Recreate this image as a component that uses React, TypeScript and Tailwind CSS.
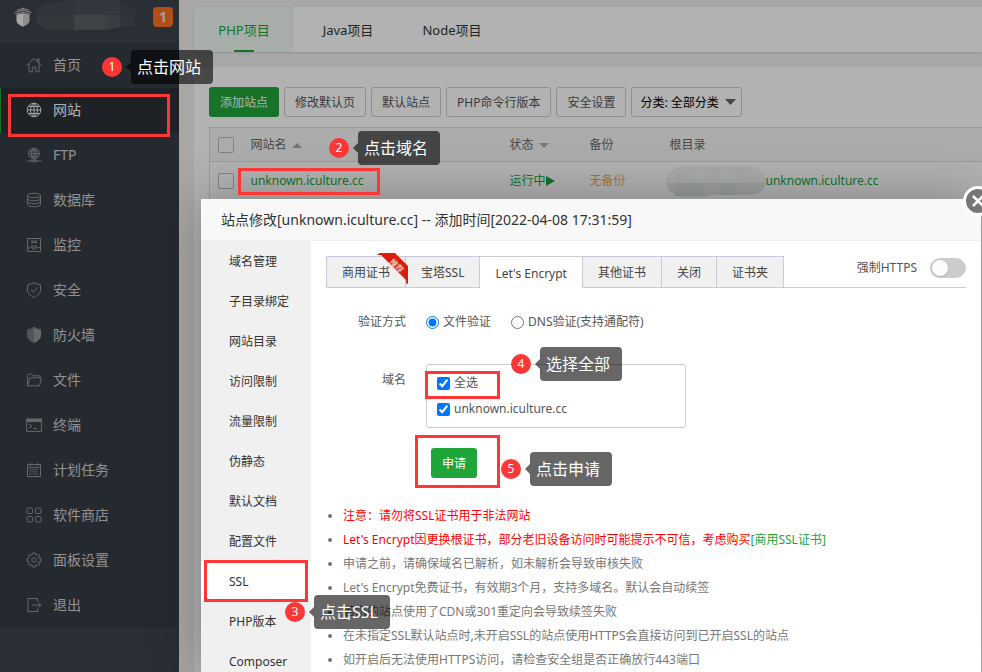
import React, { useState } from 'react';
import clsx from 'clsx';

type IconProps = { children: React.ReactNode };

const Icon = ({ children }: IconProps) => (
  <svg className="h-4 w-4 shrink-0" viewBox="0 0 16 16" fill="none" stroke="currentColor" strokeWidth={1} aria-hidden="true">
    {children}
  </svg>
);

const menu = [
  {
    label: '首页',
    icon: <path d="M.8 8.4 8 1.5l7.2 6.9M3 6.8v8h3.3v-4.6h3.4v4.6H13v-8M11.3 4.3V2h1.6v4" />,
  },
  {
    label: '网站',
    icon: <path d="M8 1.2a6.8 6.8 0 1 0 0 13.6A6.8 6.8 0 0 0 8 1.2zm0 0c-4.6 3-4.6 10.6 0 13.6M8 1.2c4.6 3 4.6 10.6 0 13.6M8 1.2v13.6M1.2 8h13.6M2.3 4.5h11.4M2.3 11.5h11.4" />,
  },
  {
    label: 'FTP',
    icon: <path d="M8 1.2a5.4 5.4 0 1 0 0 10.8A5.4 5.4 0 0 0 8 1.2zm0 0c-3.5 2.5-3.5 8.3 0 10.8M8 1.2c3.5 2.5 3.5 8.3 0 10.8M8 1.2V12M2.6 6.6h10.8M3.5 3.9h9M3.5 9.3h9M.5 14h5.2M10.3 14h5.2M5.7 13.2h4.6v1.6H5.7z" />,
  },
  {
    label: '数据库',
    icon: <path d="M1.5 3.5c0-3 13-3 13 0s-13 3-13 0zv9c0 3 13 3 13 0v-9M1.5 6.5c0 3 13 3 13 0M1.5 9.5c0 3 13 3 13 0" />,
  },
  {
    label: '监控',
    icon: <path d="M1.5 1.5h13v13h-13zM5 4h6M5 5.5h6M2 11h2.5L6 8.5 7.5 13l2-5 1.3 3.5 1-1H14" />,
  },
  {
    label: '安全',
    icon: <path d="M8 .8 14.5 3v5c0 3.5-3 6-6.5 7.5C4.500 14 1.5 11.5 1.5 8V3zM4.800 7.500l2.500 2.700 4.200-4.700" />,
  },
  {
    label: '防火墙',
    icon: (
      <>
        <path fill="currentColor" stroke="none" opacity=".7" d="M8 0v16C3.5 14 1 11.5 1 8V2.5l1.2-.8v1l1.5-.5V1.2L5 .9v1l1.5-.7V.2z" />
        <path fill="currentColor" stroke="none" d="M8 0v16c4.5-2 7-4.5 7-8V2.5l-1.2-.8v1l-1.5-.5V1.2L11 .9v1l-1.5-.7V.2z" />
      </>
    ),
  },
  {
    label: '文件',
    icon: <path d="M1.5 13.5v-10l1-1.5h3.3l1.5 1.8H14v2M1.5 13.8 4 5.8h11.4l-1.9 8z" />,
  },
  {
    label: '终端',
    icon: (
      <>
        <path d="M.6 2h14.8v12.4H.6zM3 7l3 2.2L3 11.4M7 11.5h4" />
        <path fill="currentColor" stroke="none" d="M1 2h14v3H1z" />
      </>
    ),
  },
  {
    label: '计划任务',
    icon: (
      <>
        <path d="M1.5 2.5h13v12h-13zM1.5 5.3h13M4.5.8v3M11.5.8v3" />
        <path strokeDasharray="2 1" d="M3.5 7.5h9M3.5 9.8h9M3.5 12h9" />
      </>
    ),
  },
  {
    label: '软件商店',
    icon: (
      <>
        <rect x="1" y="1" width="5.5" height="5.5" rx="1.3" />
        <rect x="9.5" y="1" width="5.5" height="5.5" rx="1.3" />
        <rect x="1" y="9.5" width="5.5" height="5.5" rx="1.3" />
        <rect x="9.5" y="9.5" width="5.5" height="5.5" rx="1.3" />
      </>
    ),
  },
  {
    label: '面板设置',
    icon: (
      <>
        <path d="m6.500 1-.5 1.900-1 .4L3.200 2.400 2.300 3.300l1 1.800-.4 1L1 6.600v2.700l1.900.5.400 1-1 1.800 1 1 1.700-1 1 .4.500 2h2.900l.5-2 1-.4 1.800 1 .9-1-1-1.800.4-1 2-.5V6.600l-2-.5-.4-1 1-1.800-.9-.9-1.800.9-1-.4L9.400 1z" />
        <circle cx="8" cy="8" r="2.2" />
      </>
    ),
  },
  {
    label: '退出',
    icon: <path d="M11.5 4.5v-3H2v13h9.5v-3M6 8h9M12.3 5.5 14.8 8l-2.5 2.5" />,
  },
];

const projectTabs = ['PHP项目', 'Java项目', 'Node项目'];
const toolbar = ['修改默认页', '默认站点', 'PHP命令行版本', '安全设置'];
const siteNav = [
  '域名管理', '子目录绑定', '网站目录', '访问限制', '流量限制', '伪静态',
  '默认文档', '配置文件', 'SSL', 'PHP版本', 'Composer',
];
const certTabs = ['商用证书', '宝塔SSL', "Let's Encrypt", '其他证书', '关闭', '证书夹'];
const tips = [
  '申请之前，请确保域名已解析，如未解析会导致审核失败',
  "Let's Encrypt免费证书，有效期3个月，支持多域名。默认会自动续签",
  '若您的站点使用了CDN或301重定向会导致续签失败',
  '在未指定SSL默认站点时,未开启SSL的站点使用HTTPS会直接访问到已开启SSL的站点',
  '如开启后无法使用HTTPS访问，请检查安全组是否正确放行443端口',
];

const frames = [
  'left-2 top-[94px] h-[43px] w-[162px]',
  'left-[238px] top-[168px] h-[27px] w-[142px]',
  'left-[204px] top-[560px] h-[42px] w-[104px]',
  'left-[425px] top-[371px] h-7 w-[75px]',
  'left-[415px] top-[435px] h-[53px] w-[85px]',
];

const steps = [
  { text: '点击网站', place: 'left-[102px] top-[50px]' },
  { text: '点击域名', place: 'left-[329px] top-[131px]' },
  { text: '点击SSL', place: 'left-[285px] top-[595px]' },
  { text: '选择全部', place: 'left-[511px] top-[347px]' },
  { text: '点击申请', place: 'left-[501px] top-[452px]' },
];

function Sidebar() {
  return (
    <aside className="flex w-[179px] shrink-0 flex-col bg-[#3c444d]">
      <div className="flex h-[43px] items-start pl-3.5 pr-1.5 pt-[7px]">
        <svg className="h-5 w-[18px]" viewBox="0 0 18 20" aria-hidden="true">
          <path d="M9 6.200 2.500 7.800v6c0 2.700 3.500 4.700 6.500 5.900z" fill="#eee" />
          <path d="M9 6.200l6.500 1.600v6c0 2.700-3.500 4.700-6.500 5.900z" fill="#ccc" />
          <path d="M9 .5v3M3 3.200 9 1.500l6 1.700M.5 5.600 9 3.300l8.500 2.300M1.500 7.400 9 5.300l7.500 2.100" fill="none" stroke="#c4c4c4" />
        </svg>
        <svg className="ml-1 -mt-[7px] h-[31px] w-[100px]" viewBox="0 0 100 31" aria-hidden="true">
          <path d="M4 8Q10 2 38 0v15H0Q0 11 4 8z" fill="#444c54" />
          <path d="M38 0h46v15H38z" fill="#4a5159" />
          <path d="M84 5l15 3v7H84z" fill="#424a53" />
          <path d="M0 15h38v15H11Q1 28 0 15z" fill="#4a5158" />
          <path d="M38 15h31v15H38z" fill="#5a6067" />
          <path d="M69 15h15v12l-15 3z" fill="#52595f" />
          <path d="M84 15h15v11H84z" fill="#444c54" />
        </svg>
        <span className="ml-auto flex h-5 w-5 items-center justify-center rounded bg-[#ff7125] text-sm font-bold text-gray-200">1</span>
      </div>
      <nav className="bg-[#363d45]">
        {menu.map((item, i) => (
          <a
            key={item.label}
            href="#"
            className={clsx(
              'flex h-[45px] items-center gap-[11px] border-l pb-0.5 pl-[25px] text-sm',
              i === 1 ? 'border-[#20a53a] bg-[#2c3138] text-white' : 'border-transparent text-[#d0d0d0]'
            )}
          >
            <span className={i === 1 ? 'opacity-90' : 'opacity-60'}>
              <Icon>{item.icon}</Icon>
            </span>
            {item.label}
          </a>
        ))}
      </nav>
    </aside>
  );
}

function SiteList() {
  return (
    <main className="min-w-0 flex-1 bg-[#f0f0f1] pl-[15px] pt-[7px]">
      <div className="flex h-[45px] gap-1 rounded-l bg-white shadow">
        {projectTabs.map((tab, i) => (
          <button
            key={tab}
            type="button"
            className={clsx(
              'relative w-[100px] pt-0.5 text-[13px]',
              i === 0 ? 'rounded-l bg-[#f0faf4] text-[#20a53a]' : 'text-[#333]'
            )}
          >
            {tab}
            {i === 0 && <span className="absolute bottom-0 left-10 h-0.5 w-5 bg-[#20a53a]" />}
          </button>
        ))}
      </div>

      <section className="mt-[15px] h-full bg-white pl-[15px] pt-5">
        <div className="flex gap-[5px] text-xs text-[#555]">
          <button type="button" className="h-[30px] rounded-[3px] bg-[#20a53a] px-[11px] pt-0.5 text-white">添加站点</button>
          {toolbar.map((label) => (
            <button key={label} type="button" className="h-[30px] whitespace-nowrap rounded-[3px] border border-[#ccc] px-2.5 pt-0.5">
              {label}
            </button>
          ))}
          <div className="relative">
            <select aria-label="分类" className="h-[30px] w-[111px] appearance-none rounded-[3px] border border-[#ccc] pl-2 pt-0.5 text-xs text-black">
              <option>分类: 全部分类</option>
            </select>
            <svg className="pointer-events-none absolute right-1.5 top-3 h-1.5 w-[11px]" viewBox="0 0 11 6" fill="#666" aria-hidden="true">
              <path d="M0 0h11L5.500 6z" />
            </svg>
          </div>
        </div>

        <table className="mt-2.5 w-full table-fixed border border-r-0 border-[#ddd] text-left text-xs text-[#666]">
          <colgroup>
            <col className="w-8" />
            <col className="w-[259px]" />
            <col className="w-20" />
            <col className="w-20" />
            <col />
          </colgroup>
          <thead>
            <tr className="h-[34px] border-b border-[#ddd] bg-[#f6f6f6]">
              <th className="pl-2"><CheckBox label="全选网站" /></th>
              <th className="pl-[9px] font-normal">网站名 <Caret up /></th>
              <th className="pl-[9px] font-normal">状态 <Caret /></th>
              <th className="pl-[9px] font-normal">备份</th>
              <th className="pl-[9px] font-normal">根目录</th>
            </tr>
          </thead>
          <tbody>
            <tr className="h-[38px] text-[#20a53a]">
              <td className="pl-2"><CheckBox label="选择 unknown.iculture.cc" /></td>
              <td className="pl-[9px]"><a href="#">unknown.iculture.cc</a></td>
              <td className="pl-[9px]">
                <a href="#" className="flex items-center">
                  运行中
                  <svg className="h-2.5 w-[9px]" viewBox="0 0 9 10" fill="currentColor" aria-hidden="true"><path d="M0 0l9 5-9 5z" /></svg>
                </a>
              </td>
              <td className="pl-[9px]"><a href="#" className="text-[#f0ad4e]">无备份</a></td>
              <td className="pl-1">
                <a href="#" className="flex items-center">
                  <svg className="h-8 w-[101px] shrink-0" viewBox="0 0 101 32" aria-hidden="true">
                    <path d="M16 1h70q14 2 15 17H1Q2 4 16 1z" fill="#f3f5f4" />
                    <path d="M10 4h14v14H10zM40 3h15v15H40zM70 3h15v15H70z" fill="#eff2f0" />
                    <path d="M1 18h100q-2 11-15 12H46l-6 2H16Q3 28 1 18z" fill="#e2e8e4" />
                    <path d="M10 18h30v13H10zM55 18h15v12H55z" fill="#dae1dc" />
                  </svg>
                  unknown.iculture.cc
                </a>
              </td>
            </tr>
          </tbody>
        </table>
      </section>
    </main>
  );
}

const CheckBox = ({ label }: { label: string }) => (
  <input type="checkbox" aria-label={label} className="block h-4 w-4 appearance-none rounded-[2px] border border-[#bbb]" />
);

const Caret = ({ up }: { up?: boolean }) => (
  <svg className="ml-0.5 inline-block h-[5px] w-2.5 align-middle" viewBox="0 0 10 5" fill="#aaa" aria-hidden="true">
    <path d={up ? 'M0 5h10L5 0z' : 'M0 0h10L5 5z'} />
  </svg>
);

function SiteDialog() {
  const [mode, setMode] = useState('file');

  return (
    <div role="dialog" aria-label="站点修改" className="relative flex h-full flex-col bg-white shadow-[1px_1px_50px_rgba(0,0,0,0.3)]">
      <h2 className="h-[42px] shrink-0 border-b border-[#eee] bg-[#f8f8f8] pl-5 text-sm leading-[41px] text-[#333]">
        站点修改[unknown.iculture.cc] -- 添加时间[2022-04-08 17:31:59]
      </h2>
      <button type="button" aria-label="关闭" className="absolute -right-3 -top-[13px] flex h-[30px] w-[30px] items-center justify-center rounded-full border-[3px] border-white bg-[#777]">
        <svg className="h-3 w-3" viewBox="0 0 12 12" stroke="#fff" strokeWidth="2.5" aria-hidden="true"><path d="M1 1l10 10M11 1 1 11" /></svg>
      </button>

      <div className="flex min-h-0 flex-1 overflow-hidden">
        <nav className="w-[110px] shrink-0 bg-[#f0f0f0] text-xs text-[#333]">
          {siteNav.map((item) => (
            <a key={item} href="#" className={clsx('block h-10 pl-7 leading-[42px]', item === 'SSL' && 'bg-white')}>
              {item}
            </a>
          ))}
        </nav>

        <div className="min-w-0 flex-1 p-[15px] text-xs text-[#555]">
          <div className="flex justify-between border-b border-[#cac9dc]">
            <div className="-mb-px flex h-8 border-l border-[#cac9dc]">
              {certTabs.map((tab, i) => (
                <button
                  key={tab}
                  type="button"
                  className={clsx(
                    'relative whitespace-nowrap border-r border-t border-[#cac9dc] px-[15px] pt-0.5 text-[#444]',
                    i === 2 ? 'bg-white' : 'border-b bg-[#f0f0f0]'
                  )}
                >
                  {tab}
                  {i === 0 && (
                    <svg className="absolute -right-1 -top-1 z-10 h-8 w-8" viewBox="0 0 32 32" aria-hidden="true">
                      <path d="M0 2 2.500 0H18l13 13v18l-2-1V27L4 2z" fill="#dc1d0a" />
                      <text x="20" y="15" fontSize="8" fill="#fff" textAnchor="middle" transform="rotate(45 19 12)">推荐</text>
                    </svg>
                  )}
                </button>
              ))}
            </div>
            <label className="flex h-[23px] items-center gap-[13px]">
              强制HTTPS
              <input
                type="checkbox"
                role="switch"
                className="h-5 w-9 appearance-none rounded-full bg-[#ccc] before:m-0.5 before:block before:h-4 before:w-4 before:rounded-full before:bg-[#fcfcfc] before:shadow before:content-['']"
              />
            </label>
          </div>

          <div role="radiogroup" aria-label="验证方式" className="mt-6 flex h-5 items-center gap-5">
            <span className="w-20 text-right">验证方式</span>
            <label className="flex items-center gap-1">
              <input type="radio" name="mode" className="h-[13px] w-[13px]" checked={mode === 'file'} onChange={() => setMode('file')} />
              文件验证
            </label>
            <label className="flex items-center gap-1">
              <input type="radio" name="mode" className="h-[13px] w-[13px]" checked={mode === 'dns'} onChange={() => setMode('dns')} />
              DNS验证(支持通配符)
            </label>
          </div>

          <div className="mt-8 flex gap-5">
            <span className="mt-2 w-20 text-right">域名</span>
            <div className="flex h-16 w-[260px] flex-col justify-center gap-2 rounded-[3px] border border-[#ccc] pl-2.5">
              <label className="flex h-[18px] items-center gap-1">
                <input type="checkbox" defaultChecked className="h-[13px] w-[13px]" />
                全选
              </label>
              <label className="flex h-[18px] items-center gap-1">
                <input type="checkbox" defaultChecked className="h-[13px] w-[13px]" />
                unknown.iculture.cc
              </label>
            </div>
          </div>

          <button type="button" className="ml-[105px] mt-5 block h-[30px] rounded-[3px] bg-[#20a53a] px-[11px] pt-0.5 text-white">申请</button>

          <ul className="mt-[26px] list-disc whitespace-nowrap pl-[17px] leading-6 text-[#777]">
            <li><span className="text-[#f00]">注意：请勿将SSL证书用于非法网站</span></li>
            <li>
              <span className="text-[#f00]">Let's Encrypt因更换根证书，部分老旧设备访问时可能提示不可信，考虑购买</span>
              <a href="#" className="text-[#20a53a]">[商用SSL证书]</a>
            </li>
            {tips.map((tip) => <li key={tip}>{tip}</li>)}
          </ul>
        </div>
      </div>
    </div>
  );
}

function Guide() {
  return (
    <div className="pointer-events-none absolute inset-0">
      {frames.map((frame) => (
        <div key={frame} className={clsx('absolute border-[3px] border-[#fd3636]', frame)} />
      ))}
      {steps.map((step, i) => (
        <div key={step.text} className={clsx('absolute flex items-center', step.place)}>
          <span className="flex h-5 w-5 items-center justify-center rounded-full bg-[#fd3636] text-xs text-white">{i + 1}</span>
          <svg className="ml-1 h-2.5 w-[5px]" viewBox="0 0 5 10" fill="#000" fillOpacity=".6" aria-hidden="true"><path d="M5 0v10L0 5z" /></svg>
          <span className="h-[34px] whitespace-nowrap rounded bg-black/60 pl-1.5 pr-3 text-base leading-[34px] text-white">{step.text}</span>
        </div>
      ))}
    </div>
  );
}

export default function App() {
  return (
    <div className="relative flex h-screen overflow-hidden font-['Noto_Sans','Noto_Sans_CJK_SC',sans-serif]">
      <Sidebar />
      <SiteList />
      <div className="absolute inset-0 bg-black/30 pl-[201px] pr-px pt-[199px]">
        <SiteDialog />
      </div>
      <Guide />
    </div>
  );
}
